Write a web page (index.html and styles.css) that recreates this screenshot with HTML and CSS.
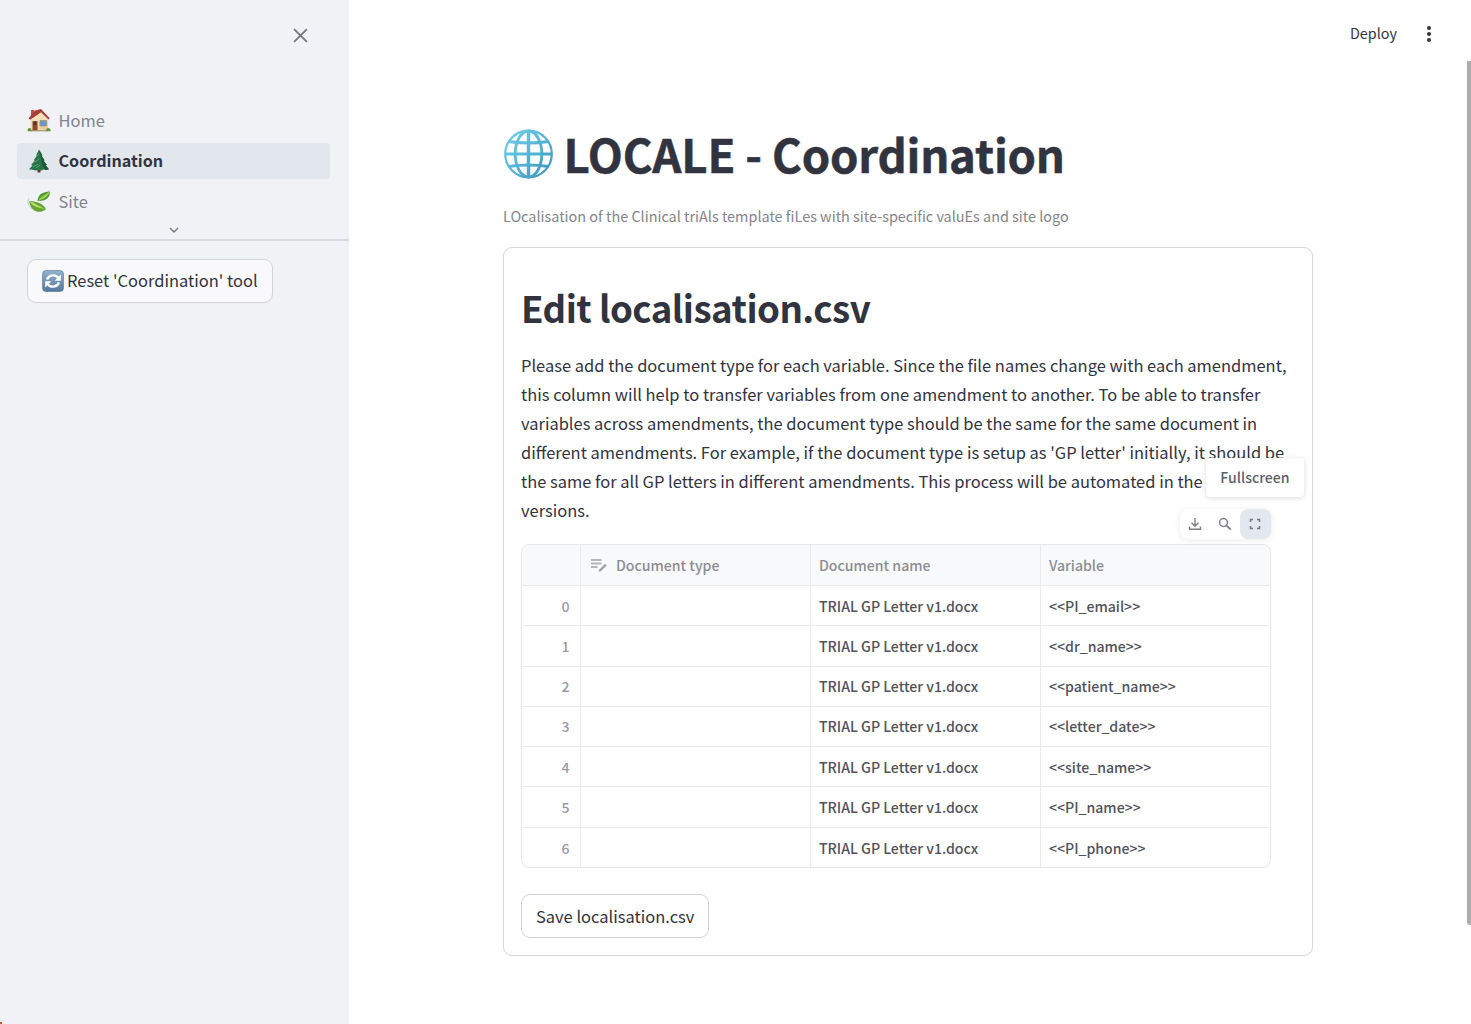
FILE: index.html
```html
<!DOCTYPE html>
<html lang="en">
<head>
<meta charset="utf-8">
<title>LOCALE - Coordination</title>
<link rel="stylesheet" href="styles.css">
</head>
<body>
<div class="app">
  <aside class="sidebar">
    <div class="sidebar-head">
      <svg class="close" viewBox="0 0 14 14"><path d="M1 1l12 12M13 1L1 13" fill="none" stroke="#747681" stroke-width="1.7"/></svg>
    </div>
    <nav class="nav">
      <a class="nav-item">
        <svg class="emoji" viewBox="0 0 24 24">
          <defs><linearGradient id="wall" x2="1" y2="1"><stop stop-color="#fbe9c6"/><stop offset="1" stop-color="#e7c99c"/></linearGradient></defs>
          <path d="M4 2h3.300v7H4z" fill="#b5564b"/>
          <path d="M3.500 10.500L12 4l9 6.500v12H3.500z" fill="url(#wall)"/>
          <path d="M1.500 10.500L8 2.500 14 1l8.800 9.200-1.300 1.400-7.500-7.200L3 11.800z" fill="#a5403b"/>
          <path d="M3.500 12.500L14 4.600l7.500 7.400v1.500h-18z" fill="#f6dfb8"/>
          <path d="M5.500 13h5v9.500h-5z" fill="#8b4b2d"/><path d="M6.800 14h2.400v3H6.800z" fill="#4f3328"/>
          <path d="M13 12.500h6.500v5.500H13z" fill="#5b9dcc" stroke="#b18c66" stroke-width=".8"/>
          <path d="M.5 23.300c0-4.500 4-4 4.200 0zM19 23.300c0-4.500 4.400-4 4.700 0z" fill="#5b9a30"/>
          <path d="M3.500 22.300h17v1h-17z" fill="#9c8262"/>
        </svg>
        <span>Home</span>
      </a>
      <a class="nav-item active">
        <svg class="emoji" viewBox="0 0 24 24">
          <path d="M10.500 19h3v4.500h-3z" fill="#66391d"/>
          <path d="M12 .5l3.400 6-1 .1 3.200 4.800-1.300.2 3.600 4.500-1.300.2 3.400 4-3.500.7-2-.5-2 1-3-.5-3 .6-3-.8-3.500-.5 3.700-4-1.700-.2 4-4.500-1.500-.2L10 6.600l-1-.1z" fill="#28734a"/>
          <path d="M12 .5l3.400 6-1 .1 3.200 4.800-1.300.2 3.600 4.500-1.300.2 3.400 4-3.500.7-3-5-1-6z" fill="#1b573c"/>
          <path d="M10 7l2-2M8 13l4-3M6 18l5-3M9 19l4-3" stroke="#58a46a" stroke-width="1"/>
        </svg>
        <span>Coordination</span>
      </a>
      <a class="nav-item">
        <svg class="emoji" viewBox="0 0 24 24">
          <path d="M2 9c-3 5 1 11 6 12M22 1c2 5-2 9-6 10" fill="none" stroke="#c4cbc1" stroke-width=".9"/>
          <path d="M2 12c6 0 14 2 17 8-5 5-15 4-17-8z" fill="#65a633"/>
          <path d="M2 12c7 2 10 6 17 8-7-1-13-2-17-8z" fill="#b4dc71"/>
          <path d="M10.500 12C11 5 16 3 22.500 2.500c1 6-4 10-12 9.500z" fill="#4e9a2e"/>
          <path d="M10.500 12c3-4 7-6 12-9.500-1 5-6 8-12 9.500z" fill="#98cd55"/>
        </svg>
        <span>Site</span>
      </a>
    </nav>
    <div class="nav-more"><svg viewBox="0 0 10 6"><path d="M1 1l4 4 4-4" fill="none" stroke="#747681" stroke-width="1.400"/></svg></div>
    <button class="btn reset">
      <svg viewBox="0 0 22 22">
        <defs><linearGradient id="tile" x2="0" y2="1"><stop stop-color="#93b2cf"/><stop offset="1" stop-color="#54789c"/></linearGradient></defs>
        <rect x=".5" y=".5" width="21" height="21" rx="3.500" fill="url(#tile)" stroke="#54789c" stroke-width=".6"/>
        <path d="M5 9.500C7 4.500 13.500 4 16.500 8M17 12.500c-2 5-8.500 5.500-11.500 1.500" fill="none" stroke="#fff" stroke-width="2.300"/>
        <path d="M18.800 4.500v6.200h-6.200zM3.200 17.500v-6.200h6.200z" fill="#fff"/>
      </svg>
      <span>Reset 'Coordination' tool</span>
    </button>
    <span class="desktop-corner"></span>
  </aside>
  <main class="main">
    <header class="toolbar">
      <span class="deploy">Deploy</span>
      <svg class="kebab" viewBox="0 0 6 18"><g fill="#31333f"><circle cx="3" cy="3" r="2"/><circle cx="3" cy="9" r="2"/><circle cx="3" cy="15" r="2"/></g></svg>
    </header>
    <div class="content">
      <h1 class="title">
        <svg class="globe" viewBox="0 0 50 50">
          <defs><linearGradient id="sea" gradientUnits="userSpaceOnUse" x1="5" y1="5" x2="45" y2="45"><stop stop-color="#6fcbe9"/><stop offset=".5" stop-color="#55b5d6"/><stop offset="1" stop-color="#3d97bc"/></linearGradient></defs>
          <g fill="none" stroke="url(#sea)">
            <circle cx="25" cy="25" r="23.300" stroke-width="2.200"/>
            <ellipse cx="25" cy="25" rx="13.300" ry="23" stroke-width="2.800"/>
            <path d="M5 12.500q20 3 40 0M2 25q23 .2 46 0M5 37.500q20-3 40 0" stroke-width="3"/>
            <path d="M25 2v46" stroke-width="3.400"/>
          </g>
        </svg>
        <span class="title-text">LOCALE - Coordination</span>
      </h1>
      <p class="caption">LOcalisation of the Clinical triAls template fiLes with site-specific valuEs and site logo</p>
      <section class="card">
        <h2 class="heading">Edit localisation.csv</h2>
        <p class="copy">Please add the document type for each variable. Since the file names change with each amendment,<br>this column will help to transfer variables from one amendment to another. To be able to transfer<br>variables across amendments, the document type should be the same for the same document in<br>different amendments. For example, if the document type is setup as 'GP letter' initially, it should be<br>the same for all GP letters in different amendments. This process will be automated in the<br>versions.</p>
        <div class="frame">
          <div class="tooltip">Fullscreen</div>
          <div class="tools">
            <span class="tool"><svg viewBox="0 0 14 14"><path d="M7 1v8M3.500 5.800L7 9.300l3.500-3.500M1.500 9.500v2.700h11V9.500" fill="none" stroke="#7d7f89" stroke-width="1.400"/></svg></span>
            <span class="tool"><svg viewBox="0 0 14 14"><circle cx="5.500" cy="5.500" r="3.900" fill="none" stroke="#7d7f89" stroke-width="1.500"/><path d="M8.300 8.300l4.400 4.400" stroke="#7d7f89" stroke-width="1.700"/></svg></span>
            <span class="tool on"><svg viewBox="0 0 14 14"><path d="M2.500 5V2.500H5M9 2.500h2.500V5M11.500 9v2.500H9M5 11.500H2.500V9" fill="none" stroke="#747681" stroke-width="1.500"/></svg></span>
          </div>
          <div class="table">
            <div class="row head"><span></span><span class="editable"><svg viewBox="0 0 18 16"><path d="M1 3h10.500M1 6.500h10.500M1 10h6.500" stroke="#b4b6bc" stroke-width="2.200"/><path d="M8.500 15l1-2.800 5.500-5.400 1.700 1.700-5.500 5.500z" fill="#a0a2a9"/></svg>Document type</span><span>Document name</span><span>Variable</span></div>
            <div class="row"><span>0</span><span></span><span>TRIAL GP Letter v1.docx</span><span>&lt;&lt;PI_email&gt;&gt;</span></div>
            <div class="row"><span>1</span><span></span><span>TRIAL GP Letter v1.docx</span><span>&lt;&lt;dr_name&gt;&gt;</span></div>
            <div class="row"><span>2</span><span></span><span>TRIAL GP Letter v1.docx</span><span>&lt;&lt;patient_name&gt;&gt;</span></div>
            <div class="row"><span>3</span><span></span><span>TRIAL GP Letter v1.docx</span><span>&lt;&lt;letter_date&gt;&gt;</span></div>
            <div class="row"><span>4</span><span></span><span>TRIAL GP Letter v1.docx</span><span>&lt;&lt;site_name&gt;&gt;</span></div>
            <div class="row"><span>5</span><span></span><span>TRIAL GP Letter v1.docx</span><span>&lt;&lt;PI_name&gt;&gt;</span></div>
            <div class="row"><span>6</span><span></span><span>TRIAL GP Letter v1.docx</span><span>&lt;&lt;PI_phone&gt;&gt;</span></div>
          </div>
        </div>
        <button class="btn">Save localisation.csv</button>
      </section>
    </div>
    <span class="scrollbar"></span>
  </main>
</div>
</body>
</html>
```
FILE: styles.css
```css
* { box-sizing: border-box; }
body {
  margin: 0;
  font-family: "Noto Sans CJK SC", "Noto Sans", sans-serif;
  font-size: 16.48px;
  color: #31333f;
  background: #fff;
}
h1, h2, p { margin: 0; white-space: nowrap; }
svg { display: block; flex: none; }
.app { display: flex; height: 1024px; overflow: hidden; }
.sidebar { position: relative; width: 349px; flex: none; background: #f0f2f6; }
.sidebar-head { display: flex; justify-content: flex-end; padding: 28px 41px 0 0; height: 102px; }
.close { width: 15px; height: 15px; }
.nav { display: flex; flex-direction: column; gap: 4.5px; padding: 0 19px 0 17px; }
.nav-item { display: flex; align-items: center; gap: 7.5px; height: 36px; padding-left: 10px; border-radius: 4px; color: #81838c; line-height: 36px; }
.nav-item.active { background: #e2e7ee; color: #31333f; font-size: 16.15px; font-weight: 700; }
.nav-item.active span { line-height: 34px; padding-bottom: 2px; }
.emoji { width: 24px; height: 24px; }
.nav-more { display: flex; justify-content: center; height: 22px; padding: 7.5px 1px 0 0; border-bottom: 2px solid #d9dbe0; }
.nav-more svg { width: 10px; height: 6px; }
.btn { display: inline-flex; align-items: center; height: 44px; padding: 0 14px; border: 1px solid #d2d3d7; border-radius: 9px; background: #fff; color: #31333f; font: inherit; line-height: 42px; white-space: nowrap; }
.reset { margin: 18px 0 0 27px; gap: 3px; background: #f9f9fb; }
.reset span { line-height: 40px; padding-bottom: 2px; }
.reset svg { width: 22px; height: 22px; }
.desktop-corner { position: absolute; left: 0; bottom: 0; width: 2px; height: 2px; background: #b8623c; }
.main { position: relative; flex: 1; }
.toolbar { display: flex; justify-content: flex-end; align-items: center; gap: 29px; height: 67px; padding-right: 39px; font-size: 14.4px; }
.deploy { padding-bottom: 2px; }
.kebab { width: 6px; height: 18px; }
.content { width: 810px; margin-left: 154px; padding-top: 53px; }
.title { display: flex; align-items: center; gap: 9.5px; height: 68px; font-size: 45.5px; letter-spacing: -.2px; font-weight: 700; line-height: 66px; }
.title-text { padding-bottom: 2px; -webkit-text-stroke: .5px #31333f; }
.globe { width: 51px; height: 50px; margin-top: -1px; }
.caption { margin-top: 15px; height: 25px; font-size: 14.43px; line-height: 25px; color: #83858c; }
.card { margin-top: 19px; height: 709px; padding: 35px 17px 0; border: 1px solid #d6d6d9; border-radius: 9px; }
.heading { height: 50px; font-size: 36.7px; letter-spacing: -.55px; line-height: 48px; font-weight: 600; }
.copy { margin-top: 18px; line-height: 29px; }
.frame { position: relative; width: 750px; margin-top: 19px; }
.tooltip { position: absolute; right: -33px; top: -86px; width: 98px; height: 39px; border-radius: 4px; background: #fff; box-shadow: 0 1px 5px rgba(40, 45, 60, .18); text-align: center; font-size: 14.1px; line-height: 38px; font-weight: 500; color: #5d5f69; }
.tools { position: absolute; right: 0; top: -35px; display: flex; width: 91px; height: 30px; border-radius: 8px; background: #fff; box-shadow: 0 1px 6px rgba(40, 45, 60, .1); }
.tool { display: flex; flex: 1; align-items: center; justify-content: center; border-radius: 8px; }
.tool svg { width: 14px; height: 14px; }
.tool.on { flex: 0 0 31px; padding-right: 1px; background: #e3e7ef; }
.table { height: 324px; border: 1px solid #e6e7ea; border-radius: 8px; overflow: hidden; font-size: 14.1px; font-weight: 500; }
.row { display: grid; grid-template-columns: 59px 230px 230px 1fr; height: 40.25px; border-bottom: 1px solid #e9eaed; color: #50525c; }
.row:last-child { border-bottom: 0; }
.row > span { display: flex; align-items: center; padding-left: 8px; border-right: 1px solid #e9eaed; white-space: nowrap; }
.row > span:first-child { justify-content: flex-end; padding: 0 10.5px 0 0; color: #999ba2; }
.row > span:last-child { border-right: 0; }
.head { height: 41px; background: #f8f9fb; color: #8b8d95; }
.row > .editable { gap: 8px; padding-left: 9px; }
.editable svg { width: 18px; height: 16px; }
.frame + .btn { margin-top: 26px; }
.scrollbar { position: absolute; right: 0; top: 61px; width: 4px; height: 864px; border-radius: 0 0 0 3px; background: #adadb1; }
```
